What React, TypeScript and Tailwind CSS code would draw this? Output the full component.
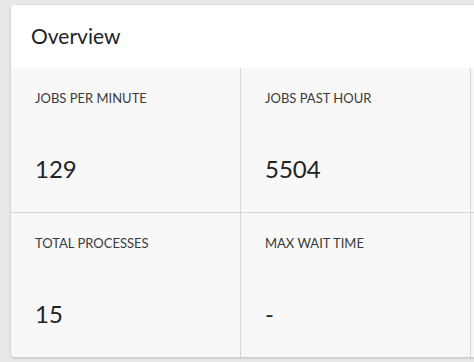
const stats = [
  [
    { label: 'Jobs per minute', value: '129' },
    { label: 'Jobs past hour', value: '5504' },
  ],
  [
    { label: 'Total processes', value: '15' },
    { label: 'Max wait time', value: '-' },
  ],
];

export default function App() {
  return (
    <div
      className="w-[474px] h-[362px] overflow-hidden bg-[#e8e8e8] pt-[5px] pl-[11px]"
      style={{ fontFamily: 'Lato, "Open Sans", sans-serif' }}
    >
      <div className="w-[700px] rounded-tl-[4px] rounded-bl-[4px] bg-white shadow-[0_1px_3px_rgba(0,0,0,0.18)]">
        <div className="h-[63px] flex items-center px-5">
          <h2 className="text-[21px] text-[#222] leading-none pb-[2px]">Overview</h2>
        </div>
        <div className="bg-[#f8f8f8] rounded-bl-[4px]">
          {stats.map((row, i) => (
            <div
              key={i}
              className={`grid grid-cols-[230px_230px_230px] ${i === 0 ? 'border-b border-[#d6d6d6]' : ''}`}
            >
              {row.map((s) => (
                <div key={s.label} className="h-[144px] border-r border-[#d6d6d6] pt-[21px] px-6">
                  <div className="text-[13px] leading-[19.5px] uppercase text-[#3a3a3a]">{s.label}</div>
                  <div className="mt-[42px] text-[24px] leading-[36px] text-[#222]">{s.value}</div>
                </div>
              ))}
              <div className="h-[144px]" />
            </div>
          ))}
        </div>
      </div>
    </div>
  );
}
